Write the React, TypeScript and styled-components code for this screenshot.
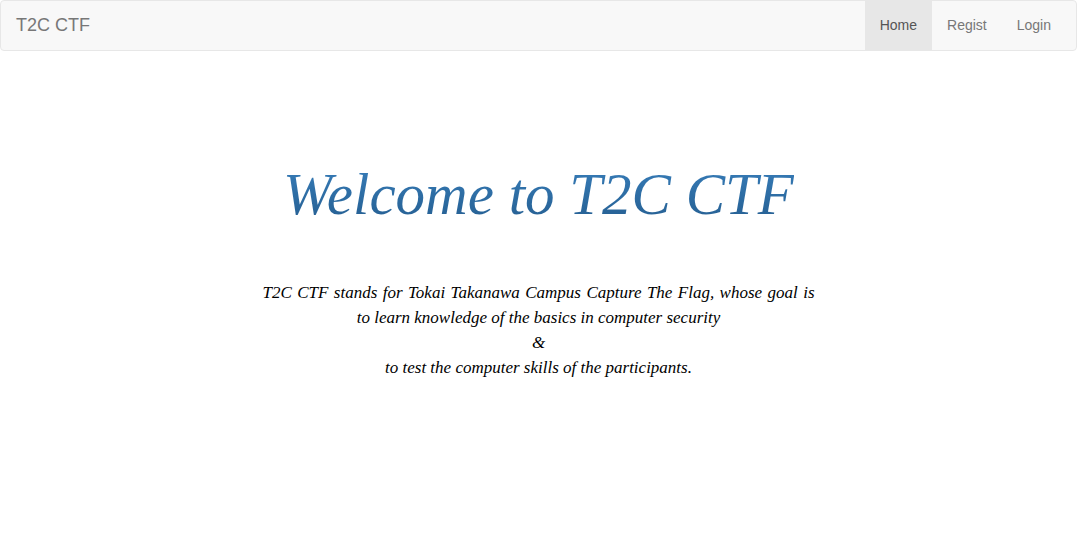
import React from "react";
import styled, { createGlobalStyle } from "styled-components";

const Global = createGlobalStyle`
  html, body { margin: 0; padding: 0; background: #fff; }
  body { font-family: "Liberation Sans", Arial, sans-serif; font-size: 14px; line-height: 1.42857; color: #333; }
`;

const Navbar = styled.nav`
  display: flex;
  justify-content: space-between;
  align-items: stretch;
  height: 51px;
  box-sizing: border-box;
  background: #f8f8f8;
  border: 1px solid #e7e7e7;
  border-radius: 4px;
`;

const Brand = styled.a`
  display: flex;
  align-items: center;
  padding: 0 15px;
  font-size: 18px;
  color: #777;
  text-decoration: none;
`;

const Nav = styled.ul`
  display: flex;
  margin: 0 10px 0 0;
  padding: 0;
  list-style: none;
`;

const NavItem = styled.li<{ $active?: boolean }>`
  display: flex;
  align-items: center;
  padding: 0 15px;
  font-size: 14px;
  color: ${(p) => (p.$active ? "#555" : "#777")};
  background: ${(p) => (p.$active ? "#e7e7e7" : "transparent")};
`;

const Main = styled.main`
  display: flex;
  flex-direction: column;
  align-items: center;
  padding-top: 103px;
`;

const Title = styled.h1`
  margin: 0;
  font-family: "Liberation Serif", "Times New Roman", serif;
  font-style: italic;
  font-weight: normal;
  font-size: 59px;
  line-height: 80px;
  background: linear-gradient(to bottom, #3a82c0 0%, #22598a 100%);
  -webkit-background-clip: text;
  background-clip: text;
  color: transparent;
`;

const Lead = styled.p`
  margin: 46px 0 0;
  width: 552px;
  font-family: "Liberation Serif", "Times New Roman", serif;
  font-style: italic;
  font-size: 17px;
  line-height: 25px;
  color: #000;
  text-align: justify;
  text-align-last: center;
`;

export default function App() {
  return (
    <>
      <Global />
      <Navbar>
        <Brand href="#">T2C CTF</Brand>
        <Nav>
          <NavItem $active>Home</NavItem>
          <NavItem>Regist</NavItem>
          <NavItem>Login</NavItem>
        </Nav>
      </Navbar>
      <Main>
        <Title>Welcome to T2C CTF</Title>
        <Lead>
          T2C CTF stands for Tokai Takanawa Campus Capture The Flag, whose goal is to learn knowledge of the basics in computer security
          <br />&amp;<br />
          to test the computer skills of the participants.
        </Lead>
      </Main>
    </>
  );
}
